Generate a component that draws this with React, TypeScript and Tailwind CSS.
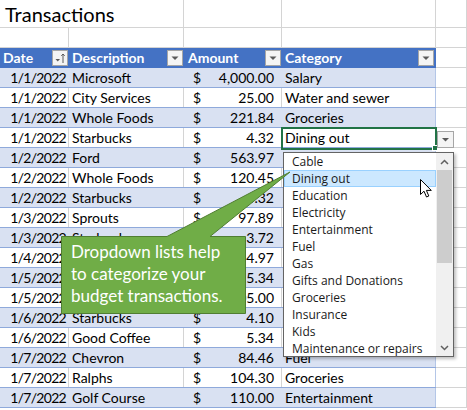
import React from 'react';

type Row = { date: string; desc: string; amount: string; cat: string };

const ROWS: Row[] = [
  { date: '1/1/2022', desc: 'Microsoft', amount: '4,000.00', cat: 'Salary' },
  { date: '1/1/2022', desc: 'City Services', amount: '25.00', cat: 'Water and sewer' },
  { date: '1/1/2022', desc: 'Whole Foods', amount: '221.84', cat: 'Groceries' },
  { date: '1/1/2022', desc: 'Starbucks', amount: '4.32', cat: 'Dining out' },
  { date: '1/2/2022', desc: 'Ford', amount: '563.97', cat: 'Auto' },
  { date: '1/2/2022', desc: 'Whole Foods', amount: '120.45', cat: 'Groceries' },
  { date: '1/2/2022', desc: 'Starbucks', amount: '4.32', cat: 'Dining out' },
  { date: '1/3/2022', desc: 'Sprouts', amount: '97.89', cat: 'Groceries' },
  { date: '1/3/2022', desc: 'Starbucks', amount: '3.72', cat: 'Dining out' },
  { date: '1/4/2022', desc: 'Peets Coffee', amount: '4.97', cat: 'Dining out' },
  { date: '1/5/2022', desc: 'Edison', amount: '25.34', cat: 'Electricity' },
  { date: '1/5/2022', desc: 'AT&T', amount: '105.00', cat: 'Cable' },
  { date: '1/6/2022', desc: 'Starbucks', amount: '4.10', cat: 'Dining out' },
  { date: '1/6/2022', desc: 'Good Coffee', amount: '5.34', cat: 'Dining out' },
  { date: '1/7/2022', desc: 'Chevron', amount: '84.46', cat: 'Fuel' },
  { date: '1/7/2022', desc: 'Ralphs', amount: '104.30', cat: 'Groceries' },
  { date: '1/7/2022', desc: 'Golf Course', amount: '110.00', cat: 'Entertainment' },
];

const OPTIONS = [
  'Cable',
  'Dining out',
  'Education',
  'Electricity',
  'Entertainment',
  'Fuel',
  'Gas',
  'Gifts and Donations',
  'Groceries',
  'Insurance',
  'Kids',
  'Maintenance or repairs',
];

function FilterButton({ sort }: { sort?: boolean }) {
  return (
    <div className="w-[16px] h-[16px] bg-[#f4f4f4] border border-[#a6a6a6] flex items-center justify-center shrink-0">
      <svg width="14" height="14" viewBox="0 0 14 14">
        {sort ? (
          <>
            <path d="M2.5 8 L7 8 L4.75 10.5 Z" fill="#595959" />
            <path d="M10 3 L10 12 M8.3 4.8 L10 3 L11.7 4.8" stroke="#595959" strokeWidth="1" fill="none" />
          </>
        ) : (
          <path d="M3.5 5.5 L10.5 5.5 L7 9 Z" fill="#595959" />
        )}
      </svg>
    </div>
  );
}

export default function App() {
  return (
    <div className="relative w-[467px] h-[410px] overflow-hidden bg-white font-['Lato',sans-serif] text-[14px] text-black">
      {/* row 1: title */}
      <div className="flex h-[28px]">
        <div className="w-[184px] border-r border-b border-[#d4d4d4] pl-[5px] pt-[3px]">
          <span className="text-[20px] leading-[22px] whitespace-nowrap">Transactions</span>
        </div>
        <div className="w-[98px] border-r border-b border-[#d4d4d4]" />
        <div className="w-[154px] border-r border-b border-[#d4d4d4]" />
        <div className="flex-1 border-r border-b border-[#d4d4d4]" />
      </div>
      {/* row 2: blank */}
      <div className="flex h-[20px]">
        <div className="w-[69px] border-r border-b border-[#d4d4d4]" />
        <div className="w-[115px] border-r border-b border-[#d4d4d4]" />
        <div className="w-[98px] border-r border-b border-[#d4d4d4]" />
        <div className="w-[154px] border-r border-b border-[#d4d4d4]" />
        <div className="flex-1 border-r border-b border-[#d4d4d4]" />
      </div>
      {/* header */}
      <div className="flex h-[20px]">
        <div className="w-[436px] flex bg-[#4472c4] text-white font-bold border-b border-[#4472c4]">
          <div className="w-[69px] flex items-center justify-between pl-[3px] pr-[1px]">
            <span>Date</span>
            <FilterButton sort />
          </div>
          <div className="w-[115px] flex items-center justify-between pl-[3px] pr-[1px]">
            <span>Description</span>
            <FilterButton />
          </div>
          <div className="w-[98px] flex items-center justify-between pl-[4px] pr-[1px]">
            <span>Amount</span>
            <FilterButton />
          </div>
          <div className="w-[154px] flex items-center justify-between pl-[3px] pr-[2px]">
            <span>Category</span>
            <FilterButton />
          </div>
        </div>
        <div className="flex-1 border-r border-b border-[#d4d4d4]" />
      </div>
      {/* data rows */}
      {ROWS.map((r, i) => {
        const band = i % 2 === 0;
        const line = band ? 'border-r-[#d9e1f2]' : 'border-r-[#d4d4d4]';
        return (
          <div key={i} className="flex h-[20px]">
            <div className={`w-[436px] flex border-b border-b-[#8ea9db] ${band ? 'bg-[#d9e1f2]' : 'bg-white'}`}>
              <div className={`w-[69px] border-r ${line} text-right pr-[2px] leading-[19px] tracking-[-0.7px]`}>{r.date}</div>
              <div className={`w-[115px] border-r ${line} pl-[3px] leading-[19px] whitespace-nowrap`}>{r.desc}</div>
              <div className={`w-[98px] border-r ${line} flex justify-between pl-[9px] pr-[7px] leading-[19px]`}>
                <span>$</span>
                <span>{r.amount}</span>
              </div>
              <div className="w-[154px] border-r border-r-[#b4c6e7] pl-[3px] leading-[19px] whitespace-nowrap">{r.cat}</div>
            </div>
            <div className="flex-1 border-r border-b border-[#d4d4d4]" />
          </div>
        );
      })}

      {/* active cell */}
      <div className="absolute left-[281px] top-[127px] w-[156px] h-[23px] border-2 border-[#217346]" />
      <div className="absolute left-[432px] top-[145px] w-[6px] h-[6px] bg-[#217346] border border-white" />
      <div className="absolute left-[437px] top-[131px] w-[17px] h-[17px] bg-[#f4f4f4] border border-[#a6a6a6] flex items-center justify-center">
        <svg width="15" height="15" viewBox="0 0 15 15">
          <path d="M4 6 L11 6 L7.5 9.5 Z" fill="#595959" />
        </svg>
      </div>

      {/* dropdown list */}
      <div className="absolute left-[283px] top-[152px] w-[171px] h-[205px] bg-white border border-[#646464] shadow-[2px_2px_3px_rgba(0,0,0,0.25)] flex font-['Open_Sans',sans-serif] text-[12px] text-[#1a1a1a]">
        <div className="flex-1 flex flex-col">
          {OPTIONS.map((o, i) => (
            <div
              key={o}
              className={`h-[17px] pl-[7px] leading-[15px] whitespace-nowrap border ${
                i === 1 ? 'bg-[#cce8ff] border-[#99d1ff]' : 'border-transparent'
              }`}
            >
              {o}
            </div>
          ))}
        </div>
        <div className="w-[17px] bg-[#f0f0f0] flex flex-col">
          <div className="h-[17px] flex items-center justify-center">
            <svg width="9" height="6" viewBox="0 0 9 6">
              <path d="M1 5 L4.5 1.5 L8 5" stroke="#606060" strokeWidth="1.5" fill="none" />
            </svg>
          </div>
          <div className="h-[93px] bg-[#cdcdcd] mx-[1px]" />
          <div className="flex-1" />
          <div className="h-[17px] flex items-center justify-center">
            <svg width="9" height="6" viewBox="0 0 9 6">
              <path d="M1 1 L4.5 4.5 L8 1" stroke="#606060" strokeWidth="1.5" fill="none" />
            </svg>
          </div>
        </div>
      </div>

      {/* mouse cursor */}
      <svg className="absolute left-[420px] top-[179px]" width="13" height="20" viewBox="0 0 13 20">
        <path d="M0.5 0.5 L0.5 15.5 L4 12.2 L6.5 18 L8.8 17 L6.4 11.4 L11.3 11.4 Z" fill="white" stroke="black" strokeWidth="1" strokeLinejoin="round" />
      </svg>

      {/* callout */}
      <svg className="absolute left-0 top-0 pointer-events-none" width="467" height="410" viewBox="0 0 467 410">
        <path
          d="M61.5 236.5 L167 236.5 L290 172 L210 236.5 L245.5 236.5 L245.5 313.5 L61.5 313.5 Z"
          fill="#70ad47"
          stroke="#507e32"
          strokeWidth="1"
          strokeLinejoin="miter"
        />
      </svg>
      <div className="absolute left-[61px] top-[236px] w-[185px] h-[78px] pl-[10px] pt-[5px] text-white text-[17px] leading-[22px]">
        <div>Dropdown lists help</div>
        <div>to categorize your</div>
        <div>budget transactions.</div>
      </div>
    </div>
  );
}
